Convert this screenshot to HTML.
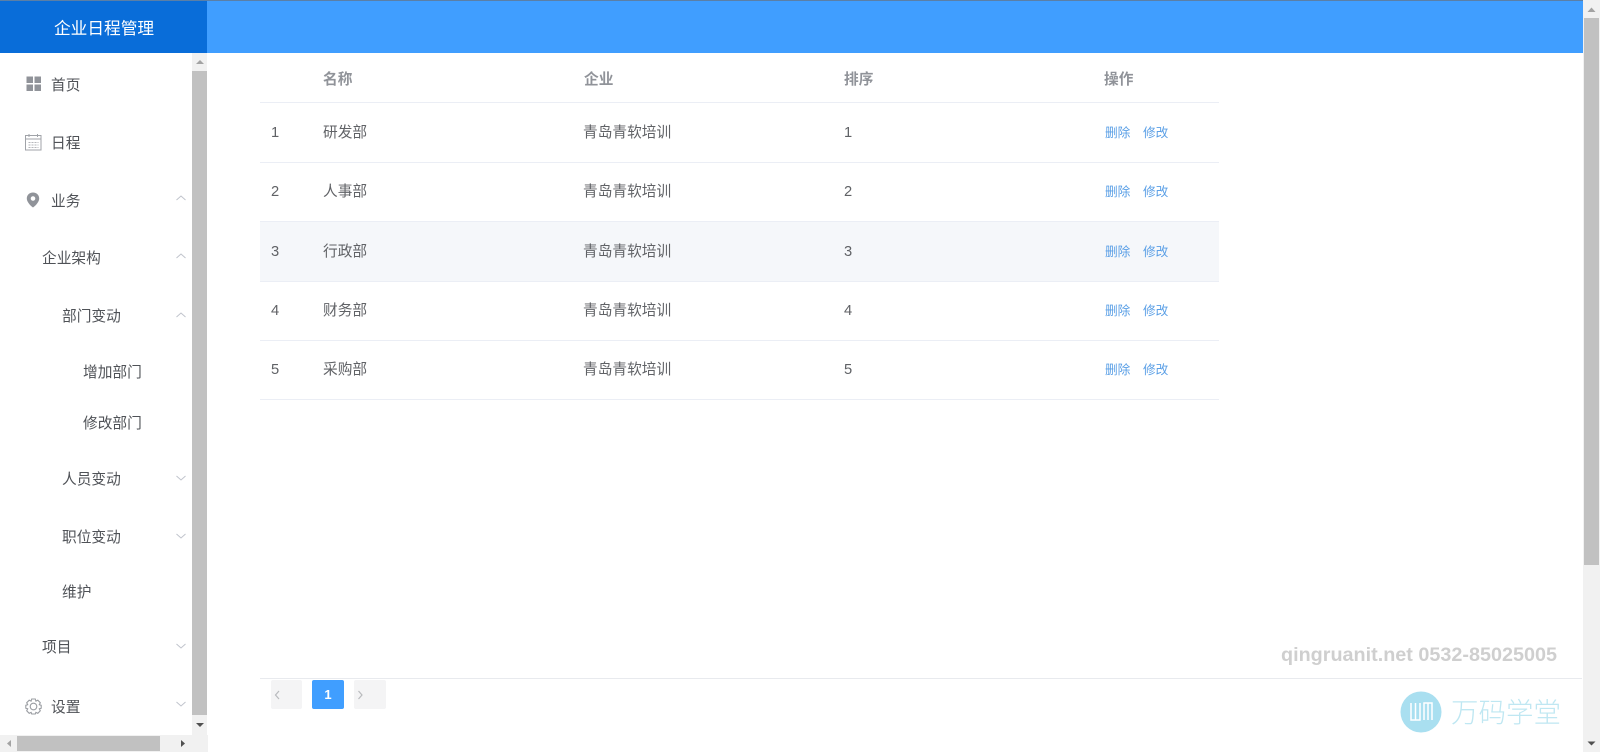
<!DOCTYPE html>
<html lang="zh"><head><meta charset="utf-8"><title>企业日程管理</title>
<style>
html,body{margin:0;padding:0;width:1600px;height:752px;overflow:hidden;background:#fff}
body{position:relative;font-family:"Liberation Sans","Noto Sans CJK SC",sans-serif;font-size:14.7px;color:#606266}
.a{position:absolute}
.t{position:absolute;white-space:nowrap;line-height:20px;height:20px}
.s{color:#4f5257}
.th{font-weight:bold;color:#909399}
.lnk{font-size:12.7px;color:#5a9fe6}
.ln{position:absolute;left:260px;width:959px;height:1px;background:#ebeef5}
svg{position:absolute;overflow:visible}
</style></head><body>
<!-- header -->
<div class="a" style="left:0;top:0;width:1600px;height:1px;background:#5b7fa6"></div>
<div class="a" style="left:0;top:1px;width:207px;height:52px;background:#096dd9"></div>
<div class="a" style="left:207px;top:1px;width:1376px;height:52px;background:#409eff"></div>
<div class="t" style="left:54px;top:19px;font-size:16.7px;color:#fff">企业日程管理</div>

<!-- sidebar scrollbars -->
<div class="a" style="left:192px;top:53px;width:15px;height:682px;background:#f1f1f1"></div>
<div class="a" style="left:192px;top:71px;width:15px;height:644px;background:#c1c1c1"></div>
<svg style="left:192px;top:53px" width="16" height="18"><path d="M4 11L8 7L12 11Z" fill="#a3a3a3"/></svg>
<svg style="left:192px;top:716px" width="16" height="18"><path d="M4 7L8 11L12 7Z" fill="#505050"/></svg>
<div class="a" style="left:0;top:735px;width:208px;height:17px;background:#f1f1f1"></div>
<div class="a" style="left:17px;top:736px;width:143px;height:15px;background:#c1c1c1"></div>
<svg style="left:0;top:735px" width="17" height="17"><path d="M11 5L7 8.500L11 12Z" fill="#a3a3a3"/></svg>
<svg style="left:175px;top:735px" width="17" height="17"><path d="M6 5L10 8.500L6 12Z" fill="#505050"/></svg>

<!-- sidebar icons -->
<svg style="left:26px;top:76px" width="16" height="16"><path fill="#909399" d="M0.500 0.500h6.500v6.500h-6.500zM8.500 0.500h6.500v6.500h-6.500zM0.500 8.500h6.500v6.500h-6.500zM8.500 8.500h6.500v6.500h-6.500z"/></svg>
<svg style="left:25px;top:134px" width="17" height="17"><rect x="0.500" y="1.500" width="15.500" height="14.500" fill="none" stroke="#a0a3a8"/><path d="M1 5h15M4 0v3M12.500 0v3" stroke="#a0a3a8" fill="none"/><path d="M3.500 8.500h10M3.500 11h10M3.500 13.500h10" stroke="#b4b6ba" stroke-dasharray="2 1" fill="none"/></svg>
<svg style="left:26px;top:192px" width="14" height="16"><path fill-rule="evenodd" fill="#909399" d="M7 0.500C3.300 0.500 0.800 3.200 0.800 6.500C0.800 10 4.500 13.800 7 15.500C9.500 13.800 13.200 10 13.200 6.500C13.200 3.200 10.700 0.500 7 0.500ZM7 4.200A2.300 2.300 0 1 1 7 8.800A2.300 2.300 0 1 1 7 4.200Z"/></svg>
<svg style="left:25px;top:698px" width="17" height="17" viewBox="0 0 17 17"><path fill="none" stroke="#9a9da2" stroke-width="1.100" d="M6.700 1H10.300L10.900 3.100L12.800 2.200L15.300 4.700L14.300 6.700L16.200 7.300V10.200L14.300 10.800L15.300 12.800L12.800 15.300L10.900 14.400L10.300 16H6.700L6.100 14.400L4.200 15.300L1.700 12.800L2.700 10.800L0.800 10.200V7.300L2.700 6.700L1.700 4.700L4.200 2.200L6.100 3.100Z"/><circle cx="8.500" cy="8.500" r="3.300" fill="none" stroke="#9a9da2" stroke-width="1.100"/></svg>

<!-- sidebar text -->
<div class="t s" style="left:51px;top:76px">首页</div>
<div class="t s" style="left:51px;top:134px">日程</div>
<div class="t s" style="left:51px;top:192px">业务</div>
<div class="t s" style="left:42px;top:249px">企业架构</div>
<div class="t s" style="left:62px;top:307px">部门变动</div>
<div class="t s" style="left:83px;top:363px">增加部门</div>
<div class="t s" style="left:83px;top:414px">修改部门</div>
<div class="t s" style="left:62px;top:470px">人员变动</div>
<div class="t s" style="left:62px;top:528px">职位变动</div>
<div class="t s" style="left:62px;top:583px">维护</div>
<div class="t s" style="left:42px;top:638px">项目</div>
<div class="t s" style="left:51px;top:698px">设置</div>

<!-- chevrons -->
<svg style="left:176px;top:195px" width="10" height="6"><path d="M0.500 5L5 1L9.500 5" fill="none" stroke="#c0c4cc"/></svg>
<svg style="left:176px;top:253px" width="10" height="6"><path d="M0.500 5L5 1L9.500 5" fill="none" stroke="#c0c4cc"/></svg>
<svg style="left:176px;top:312px" width="10" height="6"><path d="M0.500 5L5 1L9.500 5" fill="none" stroke="#c0c4cc"/></svg>
<svg style="left:176px;top:475px" width="10" height="6"><path d="M0.500 1L5 5L9.500 1" fill="none" stroke="#c0c4cc"/></svg>
<svg style="left:176px;top:533px" width="10" height="6"><path d="M0.500 1L5 5L9.500 1" fill="none" stroke="#c0c4cc"/></svg>
<svg style="left:176px;top:643px" width="10" height="6"><path d="M0.500 1L5 5L9.500 1" fill="none" stroke="#c0c4cc"/></svg>
<svg style="left:176px;top:701px" width="10" height="6"><path d="M0.500 1L5 5L9.500 1" fill="none" stroke="#c0c4cc"/></svg>

<!-- table -->
<div class="a" style="left:260px;top:222px;width:959px;height:59px;background:#f5f7fa"></div>
<div class="ln" style="top:102px"></div>
<div class="ln" style="top:162px"></div>
<div class="ln" style="top:221px"></div>
<div class="ln" style="top:281px"></div>
<div class="ln" style="top:340px"></div>
<div class="ln" style="top:399px"></div>
<div class="t th" style="left:323px;top:70px">名称</div>
<div class="t th" style="left:584px;top:70px">企业</div>
<div class="t th" style="left:844px;top:70px">排序</div>
<div class="t th" style="left:1104px;top:70px">操作</div>

<div class="t" style="left:271px;top:123px">1</div><div class="t" style="left:323px;top:123px">研发部</div><div class="t" style="left:583px;top:123px">青岛青软培训</div><div class="t" style="left:844px;top:123px">1</div><div class="t lnk" style="left:1105px;top:123px">删除</div><div class="t lnk" style="left:1143px;top:123px">修改</div>
<div class="t" style="left:271px;top:182px">2</div><div class="t" style="left:323px;top:182px">人事部</div><div class="t" style="left:583px;top:182px">青岛青软培训</div><div class="t" style="left:844px;top:182px">2</div><div class="t lnk" style="left:1105px;top:182px">删除</div><div class="t lnk" style="left:1143px;top:182px">修改</div>
<div class="t" style="left:271px;top:242px">3</div><div class="t" style="left:323px;top:242px">行政部</div><div class="t" style="left:583px;top:242px">青岛青软培训</div><div class="t" style="left:844px;top:242px">3</div><div class="t lnk" style="left:1105px;top:242px">删除</div><div class="t lnk" style="left:1143px;top:242px">修改</div>
<div class="t" style="left:271px;top:301px">4</div><div class="t" style="left:323px;top:301px">财务部</div><div class="t" style="left:583px;top:301px">青岛青软培训</div><div class="t" style="left:844px;top:301px">4</div><div class="t lnk" style="left:1105px;top:301px">删除</div><div class="t lnk" style="left:1143px;top:301px">修改</div>
<div class="t" style="left:271px;top:360px">5</div><div class="t" style="left:323px;top:360px">采购部</div><div class="t" style="left:583px;top:360px">青岛青软培训</div><div class="t" style="left:844px;top:360px">5</div><div class="t lnk" style="left:1105px;top:360px">删除</div><div class="t lnk" style="left:1143px;top:360px">修改</div>

<!-- pagination -->
<div class="a" style="left:260px;top:678px;width:1322px;height:1px;background:#e8eaee"></div>
<div class="a" style="left:271px;top:680px;width:31px;height:29px;background:#f4f4f5;border-radius:2px"></div>
<svg style="left:274px;top:690px" width="8" height="10"><path d="M5 1L1.500 5L5 9" fill="none" stroke="#b8babd" stroke-width="1.200"/></svg>
<div class="a" style="left:312px;top:680px;width:32px;height:29px;background:#409eff;border-radius:2px;color:#fff;font-weight:bold;font-size:13px;line-height:30px;text-align:center">1</div>
<div class="a" style="left:354px;top:680px;width:32px;height:29px;background:#f4f4f5;border-radius:2px"></div>
<svg style="left:357px;top:690px" width="8" height="10"><path d="M1.500 1L5 5L1.500 9" fill="none" stroke="#b8babd" stroke-width="1.200"/></svg>

<!-- watermark -->
<div class="t" style="left:1281px;top:645px;font-size:19.800px;font-weight:bold;color:#cfcfcf">qingruanit.net 0532-85025005</div>
<svg style="left:1401px;top:692px" width="40" height="40" viewBox="0 0 40 40"><circle cx="20" cy="20" r="20.500" fill="#a9dff0"/><path d="M10 11V28H19V11M14.500 11V28M23 28V11H31V28M27 11V28" fill="none" stroke="#fff" stroke-width="1.500"/></svg>
<div class="t" style="left:1451px;top:701px;font-size:27.500px;line-height:24px;height:24px;color:#bfe7f2;font-weight:300">万码学堂</div>

<!-- main scrollbar -->
<div class="a" style="left:1583px;top:0;width:17px;height:752px;background:#f1f1f1"></div>
<div class="a" style="left:1584px;top:18px;width:15px;height:547px;background:#c1c1c1"></div>
<svg style="left:1583px;top:1px" width="17" height="17"><path d="M4.500 11L8.500 6.500L12.500 11Z" fill="#a3a3a3"/></svg>
<svg style="left:1583px;top:735px" width="17" height="17"><path d="M4.500 6.500L8.500 10.500L12.500 6.500Z" fill="#505050"/></svg>
</body></html>
